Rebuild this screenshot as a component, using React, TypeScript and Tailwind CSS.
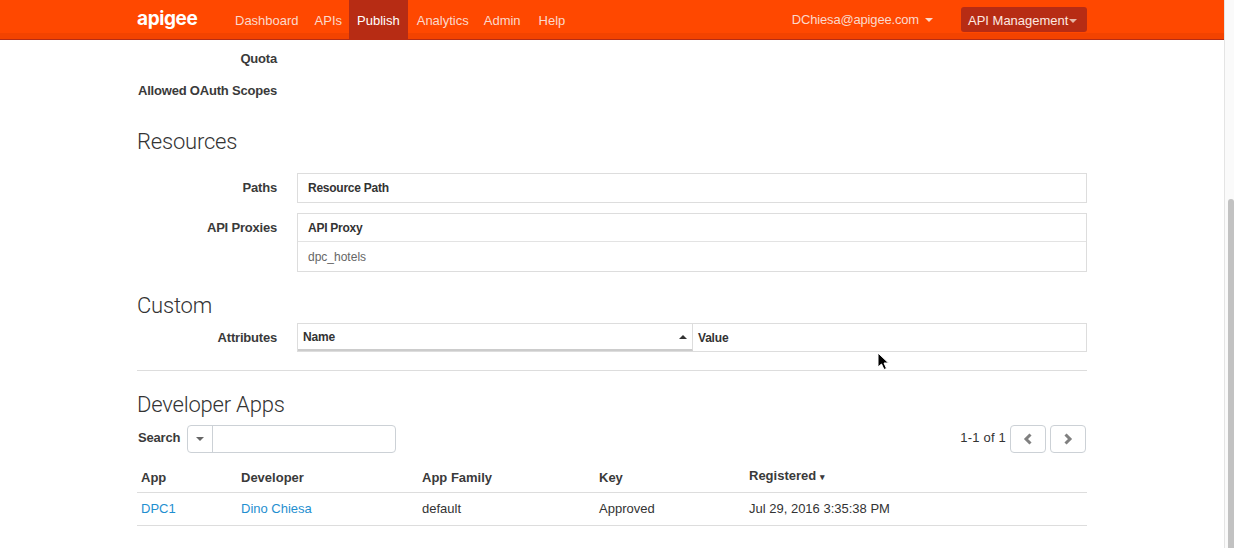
import React from "react";

const Caret = ({ className }: { className: string }) => (
  <span className={`inline-block w-0 h-0 border-x-[4px] border-x-transparent ${className}`} />
);

const Logo = () => (
  <span className="text-white text-[19px] leading-none font-bold tracking-[-0.4px] [font-family:'Inter',sans-serif]">apigee</span>
);

const NavLink = ({ label, active, className = "" }: { label: string; active?: boolean; className?: string }) => (
  <a className={`h-[39px] flex items-center pt-[2px] px-2 ${active ? "bg-[#b72c14] text-white" : "text-[#fbd9cc]"} ${className}`}>{label}</a>
);

const Heading = ({ children, className }: { children: React.ReactNode; className: string }) => (
  <h3 className={`text-[22px] leading-[26px] font-light text-[#333] tracking-[-0.2px] [font-family:'Roboto',sans-serif] ${className}`}>{children}</h3>
);

const Label = ({ children, className = "" }: { children: React.ReactNode; className?: string }) => (
  <div className={`w-[140px] text-right font-bold text-[#3a3a3a] shrink-0 whitespace-nowrap tracking-[-0.2px] ${className}`}>{children}</div>
);

const Cursor = () => (
  <svg className="absolute left-[877px] top-[352px]" width="13" height="19" viewBox="0 0 13 19">
    <path d="M1 1 L1 15 L4.5 12 L7 17.5 L9.5 16.5 L7 11 L11.5 11 Z" fill="#000" stroke="#fff" strokeWidth="1" />
  </svg>
);

export default function App() {
  return (
    <div className="relative h-[548px] w-[1234px] overflow-hidden bg-white flex text-[13px] leading-[18px] text-[#333] [font-family:'Liberation_Sans',Arial,sans-serif]">
      <div className="w-[1224px] shrink-0 flex flex-col">
        <header className="h-10 shrink-0 bg-[linear-gradient(#ff4800_0,#ff4800_33px,#f34300_33px,#f34300_39px)] border-b border-[#b72c14] pl-[137px] pr-[137px] flex items-center text-[#fbd9cc]">
          <div className="w-[90px]"><Logo /></div>
          <nav className="flex items-center">
            <NavLink label="Dashboard" />
            <NavLink label="APIs" className="pr-[7px]" />
            <NavLink label="Publish" active />
            <NavLink label="Analytics" className="ml-[1px]" />
            <NavLink label="Admin" className="ml-[-1px]" />
            <NavLink label="Help" className="ml-[2px]" />
          </nav>
          <div className="ml-auto flex items-center">
            <span className="tracking-[-0.17px] pt-[1px]">DChiesa@apigee.com</span>
            <Caret className="ml-[6px] border-t-[4px] border-t-[#fbd9cc]" />
            <div className="ml-[28px] h-[25px] w-[126px] rounded-[3px] bg-[#b72c14] text-[#fde8e0] flex items-center pl-[7px] pt-[2px]">
              API Management
              <Caret className="ml-[1px] border-t-[4px] border-t-[#e6b5a5]" />
            </div>
          </div>
        </header>

        <main className="pl-[137px] w-[1087px] box-content">
          <div className="pt-[10px] flex flex-col gap-[14px]">
            <div className="flex"><Label>Quota</Label></div>
            <div className="flex"><Label>Allowed OAuth Scopes</Label></div>
          </div>

          <Heading className="mt-[29px]">Resources</Heading>

          <div className="mt-[18px] flex">
            <Label className="pt-[6px]">Paths</Label>
            <div className="ml-5 w-[790px] h-[30px] border border-[#ddd] flex items-center px-[10px] text-[12px] font-bold tracking-[-0.25px]">Resource Path</div>
          </div>
          <div className="mt-[10px] flex">
            <Label className="pt-[6px]">API Proxies</Label>
            <div className="ml-5 w-[790px] border border-[#ddd] text-[12px]">
              <div className="h-[28px] flex items-center px-[10px] font-bold tracking-[-0.25px] border-b border-[#e3e3e3]">API Proxy</div>
              <div className="h-[29px] flex items-center px-[10px] text-[#666]">dpc_hotels</div>
            </div>
          </div>

          <Heading className="mt-[21px]">Custom</Heading>

          <div className="mt-[4px] flex">
            <Label className="pt-[6px]">Attributes</Label>
            <div className="ml-5 w-[790px] h-[29px] border border-[#ddd] flex text-[12px] font-bold tracking-[-0.2px]">
              <div className="w-[395px] h-[27px] border-b-2 border-[#ccc] border-r border-r-[#ddd] flex items-center justify-between pl-[5px] pr-[5px]">
                Name
                <span className="inline-block w-0 h-0 border-x-[4px] border-x-transparent border-b-[4px] border-b-[#333]" />
              </div>
              <div className="flex-1 flex items-center pl-[5px]">Value</div>
            </div>
          </div>

          <div className="mt-[18px] w-[950px] border-t border-[#ddd]" />

          <Heading className="mt-[21px]">Developer Apps</Heading>

          <div className="mt-[7px] w-[950px] flex items-center">
            <span className="font-bold ml-[1px] tracking-[-0.2px] text-[#3a3a3a] pb-[2px]">Search</span>
            <div className="ml-[7px] w-[209px] h-[28px] border border-[#ccd1d6] rounded-[4px] flex">
              <div className="w-[25px] border-r border-[#ccd1d6] flex items-center justify-center">
                <Caret className="border-t-[4px] border-t-[#666]" />
              </div>
            </div>
            <span className="ml-auto tracking-[0.2px] pb-[2px]">1-1 of 1</span>
            <button className="ml-[4px] w-[36px] h-[28px] border border-[#ccd1d6] rounded-[4px] flex items-center justify-center">
              <svg width="10" height="12" viewBox="0 0 10 12"><path d="M7.5 1.5 L3 6 L7.5 10.5" fill="none" stroke="#808080" strokeWidth="3" /></svg>
            </button>
            <button className="ml-[4px] mr-[1px] w-[36px] h-[28px] border border-[#ccd1d6] rounded-[4px] flex items-center justify-center">
              <svg width="10" height="12" viewBox="0 0 10 12"><path d="M2.5 1.5 L7 6 L2.5 10.5" fill="none" stroke="#808080" strokeWidth="3" /></svg>
            </button>
          </div>

          <table className="mt-[9px] w-[950px] table-fixed border-collapse">
            <thead>
              <tr className="border-b border-[#ddd] h-[30px] text-left font-bold text-[#3a3a3a]">
                <th className="w-[100px] pl-[4px] pt-[2px]">App</th>
                <th className="w-[181px] pl-[4px] pt-[2px]">Developer</th>
                <th className="w-[177px] pl-[4px] pt-[2px]">App Family</th>
                <th className="w-[150px] pl-[4px] pt-[2px]">Key</th>
                <th className="pl-[4px]">
                  Registered <span className="text-[9px] align-[0px]">▾</span>
                </th>
              </tr>
            </thead>
            <tbody>
              <tr className="border-b border-[#ddd] h-[33px]">
                <td className="pl-[4px] text-[#1f8fd0]">DPC1</td>
                <td className="pl-[4px] text-[#1f8fd0]">Dino Chiesa</td>
                <td className="pl-[4px]">default</td>
                <td className="pl-[4px]">Approved</td>
                <td className="pl-[4px]">Jul 29, 2016 3:35:38 PM</td>
              </tr>
            </tbody>
          </table>
        </main>
      </div>
      <aside className="w-[10px] h-full border-l border-[#e4e4e4] bg-[#fafafa] flex flex-col pl-[3px]">
        <div className="mt-[199px] flex-1 w-[6px] rounded-t-full bg-[#c2c2c2]" />
      </aside>
      <Cursor />
    </div>
  );
}
